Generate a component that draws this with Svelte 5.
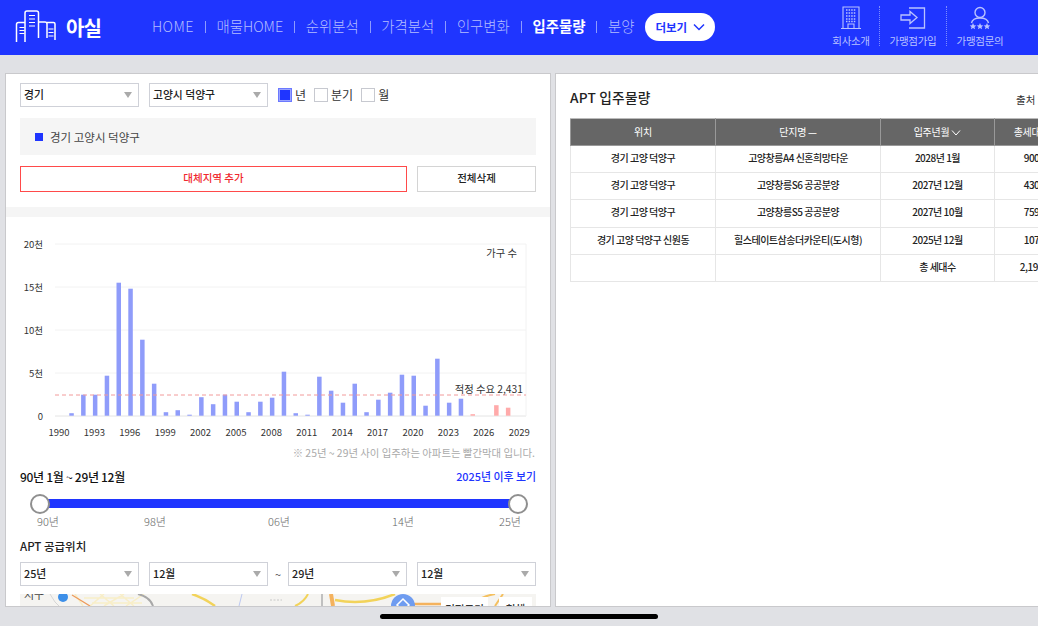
<script>
  const navBefore = ['HOME', '매물HOME', '순위분석', '가격분석', '인구변화'];
  const heights = [0, 2.5, 21, 21, 40, 133, 127, 76, 32, 3.5, 5.5, 1, 18.5, 11.5, 21, 14, 3.5, 14, 18, 44, 2.5, 1, 39, 25, 13, 32, 3.5, 16, 23, 41, 40, 10, 57, 13, 17, 1.5, 0, 10.5, 8];
  const bars = heights.map((h, i) => ({ x: 59.8 + 11.8 * i - 2.3, h, future: i >= 35 }));
  const yTicks = [['20천', 244], ['15천', 287], ['10천', 330], ['5천', 373], ['0', 416]];
  const xTicks = [1990, 1993, 1996, 1999, 2002, 2005, 2008, 2011, 2014, 2017, 2020, 2023, 2026, 2029];
  const rows = [
    ['경기 고양 덕양구', '고양창릉A4 신혼희망타운', '2028년 1월', '900'],
    ['경기 고양 덕양구', '고양창릉S6 공공분양', '2027년 12월', '430'],
    ['경기 고양 덕양구', '고양창릉S5 공공분양', '2027년 10월', '759'],
    ['경기 고양 덕양구 신원동', '힐스테이트삼송더카운티(도시형)', '2025년 12월', '107'],
    ['', '', '총 세대수', '2,196']
  ];
  const ticks = ['90년', '98년', '06년', '14년', '25년'];
</script>

<div class="page">
  <header class="top">
    <div class="logo">
      <svg width="44" height="36" viewBox="0 0 44 36" fill="none" stroke="#fff" stroke-width="1.5">
        <path d="M1.5 33V15.5q0-2 2-2H10M10 33V4q0-2 2-2h9.500q2 0 2 2V29M23.500 13H30q2 0 2 2v14M32 13.500h6.500q1.500 0 1.500 1.500V31" />
        <path d="M4.500 18.500h5M4.500 21.500h5M4.500 24.500h5M14 6.500h6M14 10h6M14 13.500h6M14 17h6M33.500 20h5M33.500 23.500h5M33.500 27h5" stroke-width="1.200"/>
      </svg>
      <span>아실</span>
    </div>
    <nav class="nav">
      {#each navBefore as item}
        <span class="nav-item">{item}</span><i class="sep"></i>
      {/each}
      <span class="nav-item active">입주물량</span><i class="sep"></i>
      <span class="nav-item">분양</span>
      <span class="more">더보기
        <svg width="12" height="8" viewBox="0 0 12 8" fill="none" stroke="#1f35ff" stroke-width="1.500"><path d="M1 1.500l5 5 5-5"/></svg>
      </span>
    </nav>
    <div class="quick">
      <div class="quick-item first">
        <svg width="22" height="24" viewBox="0 0 22 24" fill="none" stroke="#b9c2ff" stroke-width="1.100">
          <path d="M3 22V1h16v21M1 22.500h20M8 22v-4h6v4"/>
          <path d="M6 4h10M6 7h10M6 10h10M6 13h10M6 15.500h10" stroke-dasharray="1.500 1.100" stroke-width="1.500"/>
        </svg>
        <span>회사소개</span>
      </div>
      <i class="dots"></i>
      <div class="quick-item">
        <svg width="26" height="22" viewBox="0 0 26 22" fill="none" stroke="#b9c2ff" stroke-width="1.300">
          <path d="M9 1h15.500v20H9"/>
          <path d="M1 8h9V4.500l7 6-7 6V13H1z"/>
        </svg>
        <span>가맹점가입</span>
      </div>
      <i class="dots"></i>
      <div class="quick-item">
        <svg width="24" height="24" viewBox="0 0 24 24" fill="none" stroke="#b9c2ff" stroke-width="1.400">
          <circle cx="12" cy="6.500" r="5"/>
          <path d="M3.500 17q1-5 8.500-5t8.500 5"/>
          <path d="M5 17l1 2.200 2.300.2-1.800 1.500.6 2.300-2.100-1.300-2.100 1.300.6-2.300-1.800-1.500 2.300-.2zM12 17l1 2.200 2.300.2-1.800 1.500.6 2.300-2.100-1.300-2.100 1.300.6-2.300-1.800-1.500 2.300-.2zM19 17l1 2.200 2.300.2-1.800 1.500.6 2.300-2.100-1.300-2.100 1.300.6-2.300-1.800-1.500 2.300-.2z" fill="#b9c2ff" stroke="none"/>
        </svg>
        <span>가맹점문의</span>
      </div>
    </div>
  </header>

  <main class="main">
    <section class="left">
      <div class="filters">
        <div class="select">경기</div>
        <div class="select">고양시 덕양구</div>
        <div class="checks">
          <span class="check on"></span><span class="check-label">년</span>
          <span class="check"></span><span class="check-label">분기</span>
          <span class="check"></span><span class="check-label">월</span>
        </div>
      </div>
      <div class="region"><i class="square"></i>경기 고양시 덕양구</div>
      <div class="actions">
        <div class="btn red">대체지역 추가</div>
        <div class="btn clear">전체삭제</div>
      </div>
      <div class="band"></div>

      <svg class="chart" width="544" height="243" viewBox="6 217 544 243">
        {#each yTicks as [label, y]}
          <line x1="55" x2="526" y1={y} y2={y} stroke={label === '0' ? '#e4e4e4' : '#f2f2f2'} />
          <text x="43" y={y + 3.500} text-anchor="end" class="tick">{label}</text>
        {/each}
        <line x1="526" x2="526" y1="244" y2="416" stroke="#f2f2f2" />
        {#each bars as b}
          {#if b.h > 0}
            <rect x={b.x} y={415.700 - b.h} width="4.500" height={b.h} fill={b.future ? '#ffaaaa' : '#8f9cfa'} />
          {/if}
        {/each}
        <line x1="55" x2="526" y1="395" y2="395" stroke="#f29a9a" stroke-dasharray="4 3" />
        {#each xTicks as year, i}
          <text x={59 + 35.400 * i} y="435.500" text-anchor="middle" class="tick">{year}</text>
        {/each}
        <text x="517" y="257" text-anchor="end" class="tick big">가구 수</text>
        <text x="523" y="393" text-anchor="end" class="tick big">적정 수요 2,431</text>
        <text x="535" y="457" text-anchor="end" class="note">※ 25년 ~ 29년 사이 입주하는 아파트는 빨간막대 입니다.</text>
      </svg>

      <div class="range-head">
        <strong>90년 1월 ~ 29년 12월</strong>
        <span class="link">2025년 이후 보기</span>
      </div>
      <div class="slider">
        <div class="track"></div>
        <i class="handle start"></i>
        <i class="handle end"></i>
      </div>
      <div class="slider-ticks">
        {#each ticks as t}<span>{t}</span>{/each}
      </div>
      <h3 class="sub">APT 공급위치</h3>
      <div class="filters supply">
        <div class="select">25년</div>
        <div class="select">12월</div>
        <span class="tilde">~</span>
        <div class="select">29년</div>
        <div class="select">12월</div>
      </div>
      <div class="map">
        <svg width="516" height="12" viewBox="0 0 516 12" fill="none">
          <rect width="516" height="12" fill="#f5f4f1"/>
          <path d="M55 0l8 12M84 0l-14 12M104 0l-20 12M124 0l-18 12M64 4h50M72 9h50M80 0l14 12M100 0l14 12" stroke="#f8eec8" stroke-width="1.500"/>
          <path d="M30 0l5 8M35 8l4 4" stroke="#d5d5d5" stroke-width="1"/>
          <path d="M52 1l18 11" stroke="#ee9a5a" stroke-width="1.300"/>
          <path d="M118 0q12 3 15 12" stroke="#a8a8a8" stroke-width="2"/>
          <path d="M172 0q12 4 23 12" stroke="#f2d35a" stroke-width="2.500"/>
          <path d="M222 0l-3 12" stroke="#bcc8f0" stroke-width="1"/>
          <path d="M250 6h12" stroke="#c8c8c8" stroke-dasharray="2 1.500"/>
          <path d="M288 0q-4 8-13 12" stroke="#f2d35a" stroke-width="2"/>
          <path d="M302 0v12" stroke="#c0c0c0" stroke-width="2"/>
          <path d="M311 0l2 12" stroke="#f4b25e" stroke-width="4"/>
          <path d="M315 6q30 6 60-6" stroke="#f2d35a" stroke-width="2.500"/>
          <path d="M393 10h30" stroke="#f4b25e" stroke-width="2.500"/>
          <path d="M455 8q8-6 20-8M475 12l8-12" stroke="#f4c060" stroke-width="2"/>
          <circle cx="43" cy="3" r="5" fill="#3d8fe8"/>
          <circle cx="383" cy="12" r="12" fill="#6f9cf0"/>
          <path d="M383 5l6 6-6 6-6-6z" stroke="#fff" stroke-width="1.500"/>
        </svg>
        <span class="map-label">시구</span>
        <span class="map-btn one">면적크기</span>
        <span class="map-btn two">철해</span>
      </div>
    </section>

    <section class="right">
      <div class="right-head">
        <h2>APT 입주물량</h2>
        <span class="source">출처 : 국토교통부</span>
      </div>
      <table>
        <colgroup>
          <col class="c1" /><col class="c2" /><col class="c3" /><col class="c4" />
        </colgroup>
        <thead>
          <tr>
            <th>위치</th>
            <th>단지명 —</th>
            <th>입주년월
              <svg width="10" height="6" viewBox="0 0 10 6" fill="none" stroke="#fff"><path d="M1 .5l4 4.500 4-4.500"/></svg>
            </th>
            <th>총세대수</th>
          </tr>
        </thead>
        <tbody>
          {#each rows as row}
            <tr>{#each row as cell}<td>{cell}</td>{/each}</tr>
          {/each}
        </tbody>
      </table>
    </section>
  </main>

  <div class="home"><i></i></div>
</div>

<style>
  :global(body) { margin: 0; background: #e0e1e5; }
  .page {
    width: 1038px; height: 626px; overflow: hidden; background: #e0e1e5;
    display: flex; flex-direction: column; color: #222;
    font-family: "Noto Sans CJK KR", "Noto Sans", sans-serif;
  }
  .top {
    height: 55px; flex: none; background: #1f35ff;
    display: flex; align-items: flex-start; box-sizing: border-box; padding-left: 15px;
  }
  .logo { display: flex; align-items: flex-start; gap: 7px; width: 137px; padding-top: 9px; color: #fff; }
  .logo span { font-size: 20px; font-weight: 700; line-height: 26px; margin-top: 6px; letter-spacing: -1px; }
  .nav { display: flex; align-items: center; gap: 10.800px; height: 40px; margin-top: 7px; width: 565px; flex: none; }
  .nav-item { font-size: 14.400px; color: #b4bdff; font-weight: 300; white-space: nowrap; padding-bottom: 4px; }
  .nav-item:first-child { letter-spacing: .4px; }
  .nav-item.active { color: #fff; font-weight: 700; }
  .sep { width: 1px; height: 12px; background: #8d9bff; }
  .more {
    display: flex; align-items: center; justify-content: center; gap: 6px;
    width: 70px; height: 28px; box-sizing: border-box; border-radius: 14px; background: #fff;
    color: #1f35ff; font-size: 11.500px; font-weight: 700; white-space: nowrap;
  }
  .quick { display: flex; align-items: flex-start; margin-left: 106px; margin-top: 6px; }
  .quick-item { display: flex; flex-direction: column; align-items: center; width: 66px; height: 42px; }
  .quick-item.first { width: 56px; }
  .quick-item svg { height: 24px; flex: none; }
  .quick-item span { font-size: 10.500px; color: #b9c2ff; line-height: 14px; margin-top: 4px; white-space: nowrap; letter-spacing: -.3px; }
  .dots { width: 0; height: 40px; border-left: 1px dotted #7e8dff; }

  .main { flex: none; height: 534px; margin-top: 18px; padding-left: 5px; display: flex; gap: 4px; }
  .left, .right { background: #fff; border: 1px solid #c9c9cc; box-sizing: border-box; height: 534px; overflow: hidden; }
  .left { width: 546px; flex: none; }
  .right { flex: 1; min-width: 0; border-right: 0; padding: 0 0 0 14px; }

  .filters { display: flex; align-items: center; gap: 10px; padding: 9px 14px 0; }
  .select {
    width: 119px; height: 24px; flex: none; box-sizing: border-box; border: 1px solid #cfd1d8;
    font-size: 10.800px; font-weight: 500; line-height: 20px; padding-left: 3px; position: relative;
    white-space: nowrap; background: #fff; color: #222;
  }
  .select::after {
    content: ""; position: absolute; right: 6px; top: 8px;
    border-left: 4px solid transparent; border-right: 4px solid transparent; border-top: 6px solid #aaa;
  }
  .checks { display: flex; align-items: center; }
  .check { width: 14px; height: 14px; box-sizing: border-box; border: 1px solid #c7c9d0; background: #fff; }
  .check.on { background: #1f35ff; box-shadow: 0 0 0 1px #9aa4ff inset; border-color: #6b79ff; }
  .check-label { font-size: 12px; color: #333; margin: 0 8px 0 3px; line-height: 14px; }
  .region {
    margin: 11px 14px 0; height: 37px; background: #f5f5f5; display: flex; align-items: center;
    font-size: 11.500px; color: #444; padding-left: 15px; gap: 7px;
  }
  .square { width: 8px; height: 8px; background: #1f35ff; }
  .actions { display: flex; gap: 10px; padding: 11px 14px 0; }
  .btn {
    height: 26px; box-sizing: border-box; font-size: 10.500px; font-weight: 500; text-align: center; line-height: 22px;
  }
  .btn.red { width: 387px; border: 1px solid #ff4a4a; color: #f0282e; }
  .btn.clear { width: 119px; border: 1px solid #d4d4d4; color: #222; }
  .band { height: 10px; background: #f5f5f5; margin-top: 15px; }
  .chart { display: block; }
  .tick { font-size: 9.500px; fill: #333; }
  .tick.big { font-size: 10.300px; }
  .note { font-size: 10.400px; fill: #aaa; }

  .range-head { display: flex; justify-content: space-between; align-items: center; padding: 7px 14px 0; height: 18px; }
  .range-head strong { font-size: 12px; font-weight: 500; color: #111; letter-spacing: -.3px; }
  .link { font-size: 10.900px; font-weight: 500; color: #1f35ff; }
  .slider { position: relative; margin: 9px 22px 0 34px; height: 20px; width: 478px; }
  .track { position: absolute; left: 0; right: 0; top: 5px; height: 9px; background: #1f35ff; }
  .handle {
    position: absolute; top: 0; width: 20px; height: 20px; box-sizing: border-box;
    border: 2px solid #8f8f8f; border-radius: 50%; background: #fff;
  }
  .handle.start { left: -10px; }
  .handle.end { right: -10px; }
  .slider-ticks {
    display: grid; grid-template-columns: 107px 124px 124px 107px 22px;
    padding-left: 31px; height: 15px; font-size: 11px; line-height: 15px; color: #666; font-weight: 300;
  }
  .sub { margin: 8px 14px 0; font-size: 11.500px; font-weight: 500; color: #222; line-height: 18px; }
  .supply { padding-top: 7px; }
  .tilde { width: 0; display: flex; justify-content: center; font-size: 11px; color: #555; }
  .map { position: relative; margin: 8px 14px 0; height: 60px; background: #f5f4f1; overflow: hidden; }
  .map svg { display: block; }
  .map-label { position: absolute; left: 4px; top: -8px; font-size: 11px; color: #444; }
  .map-btn { position: absolute; top: 3px; background: #fff; height: 30px; font-size: 10.500px; font-weight: 500; text-align: center; line-height: 24px; color: #333; }
  .map-btn.one { left: 421px; width: 47px; }
  .map-btn.two { left: 479px; width: 33px; }

  .right-head { display: flex; align-items: flex-start; justify-content: space-between; height: 44px; width: 520px; white-space: nowrap; }
  .right-head h2 { margin: 13px 0 0; font-size: 13.700px; line-height: 20px; font-weight: 500; color: #222; letter-spacing: .2px; }
  .source { font-size: 10.500px; line-height: 14px; color: #333; margin-top: 19px; width: 74px; }
  table { border-collapse: collapse; table-layout: fixed; width: 498px; font-size: 10px; color: #222; }
  .c1 { width: 145px; } .c2 { width: 165px; } .c3 { width: 114px; } .c4 { width: 74px; }
  th {
    box-sizing: border-box; height: 27px; background: #666; color: #fff; font-weight: 400; border: 1px solid #999; border-top-color: #bbb;
    padding: 0 0 2px; letter-spacing: -.3px;
  }
  td {
    box-sizing: border-box; height: 27.200px; padding: 0 0 3px; text-align: center; border: 1px solid #e6e6e6;
    font-weight: 500; white-space: nowrap; letter-spacing: -.5px;
  }

  .home { flex: 1; display: flex; align-items: center; justify-content: center; }
  .home i { width: 278px; height: 5px; background: #000; border-radius: 3px; }
</style>
